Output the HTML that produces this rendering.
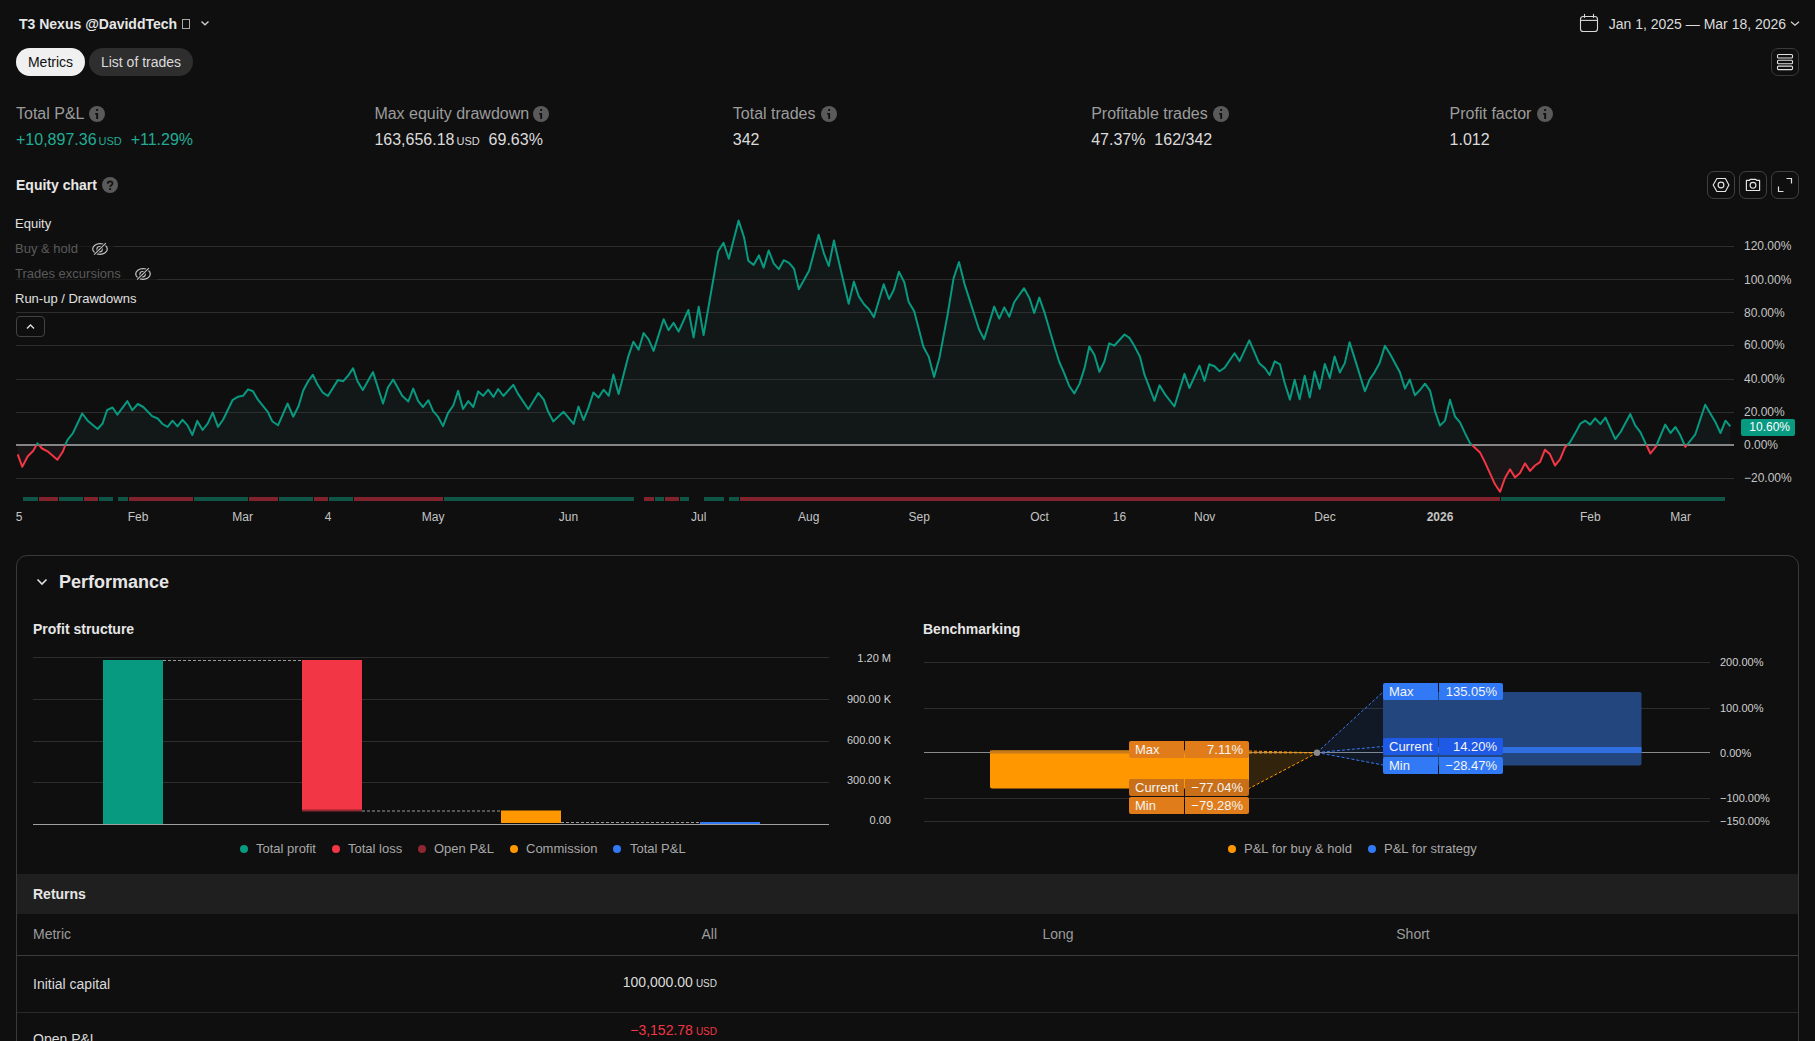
<!DOCTYPE html>
<html><head><meta charset="utf-8">
<style>
*{margin:0;padding:0;box-sizing:border-box}
html,body{width:1815px;height:1041px;overflow:hidden;background:#0f0f0f;font-family:"Liberation Sans",sans-serif;color:#dbdbdb;position:relative}
.a{position:absolute;white-space:nowrap}
.title{left:19px;top:15px;font-size:14px;font-weight:bold;color:#e6e6e6;line-height:18px}
.pill{top:48px;height:28px;border-radius:14px;font-size:14px;line-height:28px;text-align:center}
.mlabel{font-size:16px;color:#9c9c9c;line-height:20px;top:104px}
.mval{font-size:16px;color:#dbdbdb;line-height:20px;top:130px}
.usd{font-size:11px;margin-left:2px}
.green{color:#22ab94}
.ibtn{top:171px;width:28px;height:28px;border:1px solid #404040;border-radius:7px}
.yl{font-size:12px;color:#c4c4c4;left:1744px;line-height:14px}
.xl{font-size:12px;color:#c4c4c4;top:510px;line-height:14px;transform:translateX(-50%)}
.leg{font-size:13px;line-height:16px;left:15px}
.pl{font-size:11px;color:#d0d0d0;line-height:13px;text-align:right;width:80px;left:811px}
.bl{font-size:11px;color:#d0d0d0;line-height:13px;left:1720px}
.lg{font-size:13px;color:#a8a8a8;line-height:16px;top:841px}
.dot{position:absolute;width:8px;height:8px;border-radius:50%;top:845px}
.lab{position:absolute;font-size:13px;color:#f4f4f4;line-height:17px;height:17px;padding:0 6px;white-space:nowrap}
</style></head><body>
<!-- header -->
<div class="a title">T3 Nexus @DaviddTech</div>
<div class="a" style="left:182px;top:19px;width:8px;height:10px;border:1px solid #a8a8a8"></div>
<svg class="a" style="left:200px;top:19px" width="10" height="8" viewBox="0 0 10 8"><path d="M1.5 2.5 L5 5.8 L8.5 2.5" fill="none" stroke="#d0d0d0" stroke-width="1.3"/></svg>
<div class="a pill" style="left:16px;width:69px;background:#f0f0f0;color:#0f0f0f">Metrics</div>
<div class="a pill" style="left:89px;width:104px;background:#2e2e2e;color:#dbdbdb">List of trades</div>

<svg class="a" style="left:1578px;top:13px" width="22" height="21" viewBox="0 0 22 21"><rect x="2.5" y="3.5" width="17" height="15" rx="2.8" fill="none" stroke="#d8d8d8" stroke-width="1.1"/><line x1="2.5" y1="7.4" x2="19.5" y2="7.4" stroke="#d8d8d8" stroke-width="1.1"/><line x1="6.5" y1="0.9" x2="6.5" y2="4.9" stroke="#d8d8d8" stroke-width="1.1"/><line x1="15.5" y1="0.9" x2="15.5" y2="4.9" stroke="#d8d8d8" stroke-width="1.1"/></svg>
<div class="a" style="left:1608.7px;top:15px;font-size:14px;line-height:18px;color:#dcdcdc">Jan 1, 2025 — Mar 18, 2026</div>
<svg class="a" style="left:1789px;top:19px" width="12" height="9" viewBox="0 0 12 9"><path d="M2 2.8 L6 6.2 L10 2.8" fill="none" stroke="#d0d0d0" stroke-width="1.3"/></svg>
<div class="a" style="left:1771px;top:48px;width:28px;height:28px;border:1px solid #3a3a3a;border-radius:7px"></div>
<svg class="a" style="left:1771px;top:48px" width="28" height="28" viewBox="0 0 28 28"><rect x="6.5" y="6.5" width="15" height="3.5" rx="1" fill="none" stroke="#e0e0e0" stroke-width="1.1"/><rect x="6.5" y="12.3" width="15" height="3.5" rx="1" fill="none" stroke="#e0e0e0" stroke-width="1.1"/><rect x="6.5" y="18.1" width="15" height="3.5" rx="1" fill="none" stroke="#e0e0e0" stroke-width="1.1"/></svg>

<!-- metrics -->
<svg width="0" height="0" style="position:absolute"><defs><symbol id="info" viewBox="0 0 16 16"><circle cx="8" cy="8" r="8" fill="#5a5a5a"/><rect x="7.1" y="3" width="2" height="1.9" fill="#111"/><path d="M6.1 7.1 H9.1 V12.9 H7.2 V8.4 H6.1 Z" fill="#111"/></symbol></defs></svg>
<div class="a mlabel" style="left:16px">Total P&amp;L</div><svg class="a" style="left:89px;top:106px" width="16" height="16"><use href="#info"/></svg>
<div class="a mval green" style="left:16px">+10,897.36<span class="usd">USD</span>&nbsp;&nbsp;+11.29%</div>
<div class="a mlabel" style="left:374.4px">Max equity drawdown</div><svg class="a" style="left:533.4px;top:106px" width="16" height="16"><use href="#info"/></svg>
<div class="a mval" style="left:374.4px">163,656.18<span class="usd">USD</span>&nbsp;&nbsp;69.63%</div>
<div class="a mlabel" style="left:732.8px">Total trades</div><svg class="a" style="left:820.8px;top:106px" width="16" height="16"><use href="#info"/></svg>
<div class="a mval" style="left:732.8px">342</div>
<div class="a mlabel" style="left:1091.2px">Profitable trades</div><svg class="a" style="left:1213.2px;top:106px" width="16" height="16"><use href="#info"/></svg>
<div class="a mval" style="left:1091.2px">47.37%&nbsp;&nbsp;162/342</div>
<div class="a mlabel" style="left:1449.6px">Profit factor</div><svg class="a" style="left:1536.6px;top:106px" width="16" height="16"><use href="#info"/></svg>
<div class="a mval" style="left:1449.6px">1.012</div>

<!-- equity chart header -->
<div class="a" style="left:16px;top:176px;font-size:14px;font-weight:bold;line-height:18px;color:#e8e8e8">Equity chart</div>
<svg class="a" style="left:102px;top:177px" width="16" height="16" viewBox="0 0 16 16"><circle cx="8" cy="8" r="8" fill="#5a5a5a"/><path d="M5.7 6.8 C5.7 5.2 6.8 4.3 8.1 4.3 C9.5 4.3 10.5 5.2 10.5 6.4 C10.5 8 8.1 8.2 8.1 10" fill="none" stroke="#111" stroke-width="1.7"/><rect x="7.1" y="11.2" width="2" height="1.8" fill="#111"/></svg>
<div class="a ibtn" style="left:1707px"></div>
<div class="a ibtn" style="left:1739px"></div>
<div class="a ibtn" style="left:1771px"></div>
<svg class="a" style="left:1707px;top:171px" width="28" height="28" viewBox="0 0 28 28"><path d="M9.9 7.5 H18.4 L21.9 14 L18.4 20.5 H9.9 L6.2 14 Z" fill="none" stroke="#e4e4e4" stroke-width="1.15"/><circle cx="14" cy="14" r="2.9" fill="none" stroke="#e4e4e4" stroke-width="1.15"/></svg>
<svg class="a" style="left:1739px;top:171px" width="28" height="28" viewBox="0 0 28 28"><path d="M7.4 9.4 H10.4 L11.2 8.3 H16.8 L17.6 9.4 H20.6 V19.5 H7.4 Z" fill="none" stroke="#e4e4e4" stroke-width="1.15" stroke-linejoin="round"/><circle cx="14" cy="14.3" r="2.9" fill="none" stroke="#e4e4e4" stroke-width="1.15"/></svg>
<svg class="a" style="left:1771px;top:171px" width="28" height="28" viewBox="0 0 28 28"><path d="M15.5 7.5 H20.5 V12.5 M12.5 20.5 H7.5 V15.5" fill="none" stroke="#e0e0e0" stroke-width="1.2"/></svg>

<!-- equity chart -->
<svg class="a" style="left:0;top:0" width="1815" height="540">
<path d="M17.7 454.3 L22.3 466.8 L27.6 456.5 L33.1 451 L36.5 445 L36.5 445 L17.7 445 Z" fill="#1a1516"/>
<path d="M36.5 445 L37.5 443.3 L39 445 L39 445 L36.5 445 Z" fill="#111817"/>
<path d="M39 445 L42 448.5 L47.5 451.3 L57.4 459.8 L62.9 451.5 L65.3 445 L65.3 445 L39 445 Z" fill="#1a1516"/>
<path d="M65.3 445 L66.2 442.7 L67.9 439.4 L72.8 433.4 L82.2 413.5 L87.7 420.7 L97.6 429 L102.6 423.5 L107 410.2 L112.5 407.5 L117.4 414.6 L127.4 401.1 L132.3 410.2 L137.8 404 L143.3 407 L152.1 416.1 L157.7 418.5 L162.6 424 L167.6 426.8 L172.5 420.7 L177.5 426.4 L182.4 419.8 L187.4 425.1 L192.4 435 L197.3 420.9 L202.6 430 L207.8 423.4 L212.7 412.6 L218 426.9 L223.2 419.5 L232.5 400.2 L238.1 396.7 L243 395.8 L248 389.4 L253 391.2 L257.9 399.7 L267.8 411.8 L272.2 421.2 L278 425.3 L287.6 403.5 L293.2 416.7 L298.7 405.7 L303.1 390.8 L308 381.5 L312.8 374.8 L317.4 384.2 L322.9 392.7 L327.9 396 L337.8 380.1 L343.3 381.2 L348.3 375.4 L353 368.2 L357.6 381.5 L362.8 390.1 L373 372.1 L383 403.5 L387.9 387.5 L393.2 379.5 L402.2 395.8 L408.3 401.5 L413.2 388.6 L418.2 401.1 L423.1 407 L428.4 400.2 L433.1 411.2 L438 416.7 L443 426.1 L447.9 413.4 L453.4 405.2 L458.1 390.8 L463 409 L468.3 401.1 L473.3 407 L478.2 391.4 L483.2 395.8 L488.2 389.7 L493.4 396.9 L498.1 389 L503.4 396 L513.3 384.8 L517.9 393.6 L528.4 409.2 L538.3 393 L543.8 399.7 L548.2 411.8 L553.4 421.4 L558.7 416.2 L563.6 411.8 L573.6 423.9 L578.5 406.6 L583.5 420 L588.4 407.9 L593.4 392.5 L598.5 397.6 L603.6 389.7 L608.8 395.8 L613.4 374.5 L618.6 394.1 L628.4 356.1 L633.4 341.7 L638.6 349.7 L643.6 333 L648.6 339.4 L653.6 350.9 L663.6 319.2 L668.5 330.1 L673.6 322.9 L678.6 331.6 L688.4 310 L693.6 337.6 L698.7 306.7 L703.6 335.1 L718.2 251.2 L723.5 242.8 L728.8 258.8 L738.6 220.6 L744.1 237.5 L748.3 260.7 L753.6 264.9 L758.9 255.4 L763.6 267.6 L768.7 250.5 L773.7 263.4 L778.8 269.2 L783.7 260.2 L789 262.8 L794 268.6 L798.8 289.3 L809.1 270.8 L818.6 234.8 L823.9 253.3 L828.8 266 L833.9 240.6 L848.7 303.8 L853.9 281.6 L858.8 296.4 L864.2 304.5 L868.9 309.2 L873.9 317.2 L883.7 284.3 L889.1 299.1 L893.8 289.7 L898.9 271.8 L904.3 282.3 L908.6 301.8 L914.2 311.2 L923.4 346.8 L928.8 356.9 L934.1 377.1 L939.5 357.6 L947.6 314.6 L953.6 278.2 L959 262.1 L964.4 283.6 L979 329.2 L984.1 339.3 L994.2 306.6 L999.2 318.7 L1004.3 307.4 L1009.3 316.8 L1014.3 302 L1024.1 288.2 L1029.5 298.2 L1034.2 313 L1039.3 297.6 L1044.9 313.7 L1054.3 346 L1059.1 361.5 L1064.4 373.6 L1069.1 385.7 L1074.3 393.5 L1079.6 383.6 L1084.6 367.9 L1089.3 346.4 L1094.4 354.7 L1099.4 371.9 L1104.4 361.5 L1109.2 343.3 L1114.2 345.7 L1124.5 334.5 L1129.4 337.8 L1134.7 346.6 L1140 356.7 L1144.4 374.4 L1154.5 400.8 L1159.5 385.4 L1164.7 393.8 L1174.4 406.5 L1184.5 373.9 L1189.3 388 L1199.5 365.7 L1204.5 381 L1209.2 364.2 L1214.5 366.3 L1219.5 371.3 L1224.6 367.8 L1234.5 353.2 L1239.6 361.1 L1249.3 340.4 L1259 362.9 L1265 368.3 L1269.6 375 L1274.7 361.3 L1280 364.4 L1284.4 382 L1289.9 399.6 L1294.7 379.8 L1299.6 399.2 L1304.7 375.7 L1309.8 397.4 L1314.6 371.6 L1319.7 388.9 L1324.8 363.9 L1329.8 378 L1334.6 356.4 L1339.8 372.5 L1344.8 363.1 L1349.6 342.3 L1354.9 359.1 L1364.9 391.3 L1369.5 379.8 L1374.7 372.1 L1379.6 363.1 L1384.9 345.7 L1390.2 354.2 L1399.9 372.3 L1405 388.6 L1409.8 379.5 L1414.9 395.2 L1420 390 L1425 383.7 L1430 390.6 L1435 411.2 L1440 425.6 L1445 420.6 L1450 399.7 L1455 416.5 L1460 422.4 L1465 433.1 L1470 443.1 L1472 445 L1472 445 L65.3 445 Z" fill="#111817"/>
<path d="M1472 445 L1480 452.4 L1485 462.4 L1495 484.3 L1500 491.8 L1505 478 L1510 469.3 L1515 477.4 L1520 473 L1525 463.4 L1530 470.9 L1535 465.5 L1540 462.2 L1545 449.7 L1550 454.3 L1555 465.5 L1560 459.3 L1565 447.4 L1567.3 445 L1567.3 445 L1472 445 Z" fill="#1a1516"/>
<path d="M1567.3 445 L1570 442.2 L1575 433.6 L1580.3 423.7 L1585.3 420.7 L1590.2 424.6 L1595.1 418.4 L1600.4 424.1 L1605.4 417.5 L1615.3 439.2 L1620.6 432 L1630.3 414.1 L1635.2 425.4 L1640.5 432.3 L1645.7 443.6 L1646.4 445 L1646.4 445 L1567.3 445 Z" fill="#111817"/>
<path d="M1646.4 445 L1650.4 453.5 L1655.9 446.6 L1656.6 445 L1656.6 445 L1646.4 445 Z" fill="#1a1516"/>
<path d="M1656.6 445 L1665.2 424.6 L1670.5 433 L1675.5 427 L1680.5 435.6 L1684.6 445 L1684.6 445 L1656.6 445 Z" fill="#111817"/>
<path d="M1684.6 445 L1685.4 446.9 L1686.9 445 L1686.9 445 L1684.6 445 Z" fill="#1a1516"/>
<path d="M1686.9 445 L1695.3 434.3 L1705.2 404.8 L1715.2 421.7 L1720.5 433 L1725.5 420.7 L1730.4 426.4 L1730.4 445 L1686.9 445 Z" fill="#111817"/>
<g fill="#2e2e2e"><rect x="16" y="246" width="1718" height="1"/><rect x="16" y="279" width="1718" height="1"/><rect x="16" y="312" width="1718" height="1"/><rect x="16" y="345" width="1718" height="1"/><rect x="16" y="379" width="1718" height="1"/><rect x="16" y="412" width="1718" height="1"/><rect x="16" y="478" width="1718" height="1"/></g>
<rect x="16" y="444" width="1718" height="2" fill="#858585"/>
<path d="M17.7 454.3 L22.3 466.8 L27.6 456.5 L33.1 451 L36.5 445" fill="none" stroke="#f23645" stroke-width="2" stroke-linejoin="round"/>
<path d="M36.5 445 L37.5 443.3 L39 445" fill="none" stroke="#089981" stroke-width="2" stroke-linejoin="round"/>
<path d="M39 445 L42 448.5 L47.5 451.3 L57.4 459.8 L62.9 451.5 L65.3 445" fill="none" stroke="#f23645" stroke-width="2" stroke-linejoin="round"/>
<path d="M65.3 445 L66.2 442.7 L67.9 439.4 L72.8 433.4 L82.2 413.5 L87.7 420.7 L97.6 429 L102.6 423.5 L107 410.2 L112.5 407.5 L117.4 414.6 L127.4 401.1 L132.3 410.2 L137.8 404 L143.3 407 L152.1 416.1 L157.7 418.5 L162.6 424 L167.6 426.8 L172.5 420.7 L177.5 426.4 L182.4 419.8 L187.4 425.1 L192.4 435 L197.3 420.9 L202.6 430 L207.8 423.4 L212.7 412.6 L218 426.9 L223.2 419.5 L232.5 400.2 L238.1 396.7 L243 395.8 L248 389.4 L253 391.2 L257.9 399.7 L267.8 411.8 L272.2 421.2 L278 425.3 L287.6 403.5 L293.2 416.7 L298.7 405.7 L303.1 390.8 L308 381.5 L312.8 374.8 L317.4 384.2 L322.9 392.7 L327.9 396 L337.8 380.1 L343.3 381.2 L348.3 375.4 L353 368.2 L357.6 381.5 L362.8 390.1 L373 372.1 L383 403.5 L387.9 387.5 L393.2 379.5 L402.2 395.8 L408.3 401.5 L413.2 388.6 L418.2 401.1 L423.1 407 L428.4 400.2 L433.1 411.2 L438 416.7 L443 426.1 L447.9 413.4 L453.4 405.2 L458.1 390.8 L463 409 L468.3 401.1 L473.3 407 L478.2 391.4 L483.2 395.8 L488.2 389.7 L493.4 396.9 L498.1 389 L503.4 396 L513.3 384.8 L517.9 393.6 L528.4 409.2 L538.3 393 L543.8 399.7 L548.2 411.8 L553.4 421.4 L558.7 416.2 L563.6 411.8 L573.6 423.9 L578.5 406.6 L583.5 420 L588.4 407.9 L593.4 392.5 L598.5 397.6 L603.6 389.7 L608.8 395.8 L613.4 374.5 L618.6 394.1 L628.4 356.1 L633.4 341.7 L638.6 349.7 L643.6 333 L648.6 339.4 L653.6 350.9 L663.6 319.2 L668.5 330.1 L673.6 322.9 L678.6 331.6 L688.4 310 L693.6 337.6 L698.7 306.7 L703.6 335.1 L718.2 251.2 L723.5 242.8 L728.8 258.8 L738.6 220.6 L744.1 237.5 L748.3 260.7 L753.6 264.9 L758.9 255.4 L763.6 267.6 L768.7 250.5 L773.7 263.4 L778.8 269.2 L783.7 260.2 L789 262.8 L794 268.6 L798.8 289.3 L809.1 270.8 L818.6 234.8 L823.9 253.3 L828.8 266 L833.9 240.6 L848.7 303.8 L853.9 281.6 L858.8 296.4 L864.2 304.5 L868.9 309.2 L873.9 317.2 L883.7 284.3 L889.1 299.1 L893.8 289.7 L898.9 271.8 L904.3 282.3 L908.6 301.8 L914.2 311.2 L923.4 346.8 L928.8 356.9 L934.1 377.1 L939.5 357.6 L947.6 314.6 L953.6 278.2 L959 262.1 L964.4 283.6 L979 329.2 L984.1 339.3 L994.2 306.6 L999.2 318.7 L1004.3 307.4 L1009.3 316.8 L1014.3 302 L1024.1 288.2 L1029.5 298.2 L1034.2 313 L1039.3 297.6 L1044.9 313.7 L1054.3 346 L1059.1 361.5 L1064.4 373.6 L1069.1 385.7 L1074.3 393.5 L1079.6 383.6 L1084.6 367.9 L1089.3 346.4 L1094.4 354.7 L1099.4 371.9 L1104.4 361.5 L1109.2 343.3 L1114.2 345.7 L1124.5 334.5 L1129.4 337.8 L1134.7 346.6 L1140 356.7 L1144.4 374.4 L1154.5 400.8 L1159.5 385.4 L1164.7 393.8 L1174.4 406.5 L1184.5 373.9 L1189.3 388 L1199.5 365.7 L1204.5 381 L1209.2 364.2 L1214.5 366.3 L1219.5 371.3 L1224.6 367.8 L1234.5 353.2 L1239.6 361.1 L1249.3 340.4 L1259 362.9 L1265 368.3 L1269.6 375 L1274.7 361.3 L1280 364.4 L1284.4 382 L1289.9 399.6 L1294.7 379.8 L1299.6 399.2 L1304.7 375.7 L1309.8 397.4 L1314.6 371.6 L1319.7 388.9 L1324.8 363.9 L1329.8 378 L1334.6 356.4 L1339.8 372.5 L1344.8 363.1 L1349.6 342.3 L1354.9 359.1 L1364.9 391.3 L1369.5 379.8 L1374.7 372.1 L1379.6 363.1 L1384.9 345.7 L1390.2 354.2 L1399.9 372.3 L1405 388.6 L1409.8 379.5 L1414.9 395.2 L1420 390 L1425 383.7 L1430 390.6 L1435 411.2 L1440 425.6 L1445 420.6 L1450 399.7 L1455 416.5 L1460 422.4 L1465 433.1 L1470 443.1 L1472 445" fill="none" stroke="#089981" stroke-width="2" stroke-linejoin="round"/>
<path d="M1472 445 L1480 452.4 L1485 462.4 L1495 484.3 L1500 491.8 L1505 478 L1510 469.3 L1515 477.4 L1520 473 L1525 463.4 L1530 470.9 L1535 465.5 L1540 462.2 L1545 449.7 L1550 454.3 L1555 465.5 L1560 459.3 L1565 447.4 L1567.3 445" fill="none" stroke="#f23645" stroke-width="2" stroke-linejoin="round"/>
<path d="M1567.3 445 L1570 442.2 L1575 433.6 L1580.3 423.7 L1585.3 420.7 L1590.2 424.6 L1595.1 418.4 L1600.4 424.1 L1605.4 417.5 L1615.3 439.2 L1620.6 432 L1630.3 414.1 L1635.2 425.4 L1640.5 432.3 L1645.7 443.6 L1646.4 445" fill="none" stroke="#089981" stroke-width="2" stroke-linejoin="round"/>
<path d="M1646.4 445 L1650.4 453.5 L1655.9 446.6 L1656.6 445" fill="none" stroke="#f23645" stroke-width="2" stroke-linejoin="round"/>
<path d="M1656.6 445 L1665.2 424.6 L1670.5 433 L1675.5 427 L1680.5 435.6 L1684.6 445" fill="none" stroke="#089981" stroke-width="2" stroke-linejoin="round"/>
<path d="M1684.6 445 L1685.4 446.9 L1686.9 445" fill="none" stroke="#f23645" stroke-width="2" stroke-linejoin="round"/>
<path d="M1686.9 445 L1695.3 434.3 L1705.2 404.8 L1715.2 421.7 L1720.5 433 L1725.5 420.7 L1730.4 426.4" fill="none" stroke="#089981" stroke-width="2" stroke-linejoin="round"/>
<g fill="#0f5548">
<rect x="23" y="497" width="15" height="4"/><rect x="59" y="497" width="24" height="4"/><rect x="99" y="497" width="14" height="4"/><rect x="118" y="497" width="10" height="4"/><rect x="194" y="497" width="54" height="4"/><rect x="279" y="497" width="34" height="4"/><rect x="329" y="497" width="24" height="4"/><rect x="444" y="497" width="190" height="4"/><rect x="655" y="497" width="9" height="4"/><rect x="680" y="497" width="9" height="4"/><rect x="704" y="497" width="20" height="4"/><rect x="729" y="497" width="10" height="4"/><rect x="1501" y="497" width="224" height="4"/>
</g>
<g fill="#82222c">
<rect x="39" y="497" width="19" height="4"/><rect x="84" y="497" width="14" height="4"/><rect x="129" y="497" width="64" height="4"/><rect x="249" y="497" width="29" height="4"/><rect x="314" y="497" width="14" height="4"/><rect x="354" y="497" width="89" height="4"/><rect x="644" y="497" width="10" height="4"/><rect x="665" y="497" width="14" height="4"/><rect x="740" y="497" width="760" height="4"/>
</g>
</svg>
<!-- legend -->
<div class="a" style="left:11px;top:212px;width:48px;height:24px;background:#0f0f0f"></div>
<div class="a leg" style="top:216px;color:#e0e0e0">Equity</div>
<div class="a" style="left:11px;top:235px;width:103px;height:25px;background:rgba(15,15,15,0.6)"></div>
<div class="a leg" style="top:241px;color:#5a5a5a">Buy &amp; hold</div>
<svg class="a" style="left:91px;top:241px" width="18" height="15" viewBox="0 0 18 15"><ellipse cx="9" cy="8" rx="7.3" ry="5.4" fill="none" stroke="#c4c4c4" stroke-width="1.2"/><circle cx="8.6" cy="8.2" r="2.7" fill="none" stroke="#c4c4c4" stroke-width="1.1"/><path d="M3.1 13.7 L14.9 2.2" stroke="#0f0f0f" stroke-width="2.8"/><path d="M3.1 13.7 L14.9 2.2" stroke="#c4c4c4" stroke-width="1.1"/></svg>
<div class="a" style="left:11px;top:261px;width:146px;height:25px;background:rgba(15,15,15,0.6)"></div>
<div class="a leg" style="top:266px;color:#5a5a5a">Trades excursions</div>
<svg class="a" style="left:134px;top:266px" width="18" height="15" viewBox="0 0 18 15"><ellipse cx="9" cy="8" rx="7.3" ry="5.4" fill="none" stroke="#c4c4c4" stroke-width="1.2"/><circle cx="8.6" cy="8.2" r="2.7" fill="none" stroke="#c4c4c4" stroke-width="1.1"/><path d="M3.1 13.7 L14.9 2.2" stroke="#0f0f0f" stroke-width="2.8"/><path d="M3.1 13.7 L14.9 2.2" stroke="#c4c4c4" stroke-width="1.1"/></svg>
<div class="a leg" style="top:291px;color:#e0e0e0">Run-up / Drawdowns</div>
<div class="a" style="left:16px;top:316px;width:29px;height:21px;border:1px solid #424242;border-radius:4px"></div>
<svg class="a" style="left:16px;top:316px" width="29" height="21" viewBox="0 0 29 21"><path d="M11 12.5 L14.5 9 L18 12.5" fill="none" stroke="#e0e0e0" stroke-width="1.3"/></svg>

<!-- y labels -->
<div class="a yl" style="top:239px">120.00%</div>
<div class="a yl" style="top:273px">100.00%</div>
<div class="a yl" style="top:306px">80.00%</div>
<div class="a yl" style="top:338px">60.00%</div>
<div class="a yl" style="top:372px">40.00%</div>
<div class="a yl" style="top:405px">20.00%</div>
<div class="a yl" style="top:438px">0.00%</div>
<div class="a yl" style="top:471px">−20.00%</div>
<div class="a" style="left:1741px;top:419px;width:54px;height:17px;background:#089981;border-radius:2px;color:#fff;font-size:12px;line-height:17px;text-align:right;padding-right:5px">10.60%</div>

<!-- x labels -->
<div class="a xl" style="left:19px">5</div>
<div class="a xl" style="left:138px">Feb</div>
<div class="a xl" style="left:242.7px">Mar</div>
<div class="a xl" style="left:328px">4</div>
<div class="a xl" style="left:433.2px">May</div>
<div class="a xl" style="left:568.5px">Jun</div>
<div class="a xl" style="left:698.7px">Jul</div>
<div class="a xl" style="left:808.8px">Aug</div>
<div class="a xl" style="left:919.2px">Sep</div>
<div class="a xl" style="left:1039.5px">Oct</div>
<div class="a xl" style="left:1119.5px">16</div>
<div class="a xl" style="left:1204.7px">Nov</div>
<div class="a xl" style="left:1325px">Dec</div>
<div class="a xl" style="left:1440px;font-weight:bold">2026</div>
<div class="a xl" style="left:1590.3px">Feb</div>
<div class="a xl" style="left:1680.6px">Mar</div>

<!-- performance panel -->
<div class="a" style="left:16px;top:555px;width:1783px;height:600px;border:1px solid #3a3a3a;border-radius:11px"></div>
<svg class="a" style="left:34px;top:575px" width="16" height="14" viewBox="0 0 16 14"><path d="M3.5 4.5 L8 9 L12.5 4.5" fill="none" stroke="#e0e0e0" stroke-width="1.6"/></svg>
<div class="a" style="left:59px;top:571px;font-size:18px;font-weight:bold;line-height:22px;color:#e6e6e6">Performance</div>

<div class="a" style="left:33px;top:620px;font-size:14px;font-weight:bold;line-height:18px;color:#e6e6e6">Profit structure</div>
<svg class="a" style="left:0;top:640px" width="900" height="200">
<g fill="#2e2e2e">
<rect x="33" y="17" width="796" height="1"/><rect x="33" y="59" width="796" height="1"/><rect x="33" y="101" width="796" height="1"/><rect x="33" y="142" width="796" height="1"/>
</g>
<rect x="103" y="20" width="60" height="164.5" fill="#089981"/>
<rect x="302" y="20" width="60" height="150" fill="#f23645"/>
<rect x="302" y="169.5" width="60" height="2" fill="#8f2731"/>
<rect x="501" y="170.5" width="60" height="12.5" fill="#ff9800"/>
<rect x="700" y="182" width="60" height="2.5" fill="#3179f5"/>
<path d="M163 20.5 H302 M362 171 H501 M561 182.5 H700" stroke="#9a9a9a" stroke-width="1" stroke-dasharray="3 2"/>
<rect x="33" y="184" width="796" height="1" fill="#a0a0a0"/>
</svg>
<div class="a pl" style="top:652px">1.20 M</div>
<div class="a pl" style="top:693px">900.00 K</div>
<div class="a pl" style="top:734px">600.00 K</div>
<div class="a pl" style="top:774px">300.00 K</div>
<div class="a pl" style="top:814px">0.00</div>
<span class="dot" style="left:240px;background:#089981"></span><div class="a lg" style="left:256px">Total profit</div>
<span class="dot" style="left:332px;background:#f23645"></span><div class="a lg" style="left:348px">Total loss</div>
<span class="dot" style="left:418px;background:#8f2731"></span><div class="a lg" style="left:434px">Open P&amp;L</div>
<span class="dot" style="left:510px;background:#ff9800"></span><div class="a lg" style="left:526px">Commission</div>
<span class="dot" style="left:613px;background:#3179f5"></span><div class="a lg" style="left:630px">Total P&amp;L</div>

<div class="a" style="left:923px;top:620px;font-size:14px;font-weight:bold;line-height:18px;color:#e6e6e6">Benchmarking</div>
<svg class="a" style="left:900px;top:640px" width="900" height="200">
<g fill="#2e2e2e">
<rect x="24" y="22" width="786" height="1"/><rect x="24" y="68" width="786" height="1"/><rect x="24" y="158" width="786" height="1"/><rect x="24" y="181" width="786" height="1"/>
</g>
<rect x="24" y="112" width="786" height="1" fill="#8a8a8a"/>
<path d="M417 112.8 L483 52 L483 125.5 Z" fill="#3179f5" fill-opacity="0.1"/>
<path d="M417 112.8 L349 111 L349 148.5 Z" fill="#ff9800" fill-opacity="0.15"/>
<rect x="90" y="110.5" width="259" height="38" rx="2" fill="#ff9800"/>
<rect x="90" y="110.5" width="259" height="3" fill="#c87a1a"/>
<rect x="483" y="52" width="258.5" height="73.5" rx="2" fill="#23467f"/>
<rect x="483" y="107" width="258.5" height="6" fill="#2f6fe0"/>
<path d="M417 112.8 L349 111 M417 112.8 L349 113 M417 112.8 L349 148.5" stroke="#ff9800" stroke-width="1" stroke-dasharray="3 2"/>
<path d="M417 112.5 L483 52 M417 112.5 L483 106.5 M417 112.5 L483 125" stroke="#3a7bf0" stroke-width="1" stroke-dasharray="3 2"/>
<circle cx="417" cy="112.8" r="3.2" fill="#8a8a8a"/>
</svg>
<div class="a lab" style="left:1129px;top:741px;width:55px;background:#e07c1a;border-radius:2px 0 0 2px">Max</div>
<div class="a lab" style="left:1185px;top:741px;width:64px;background:#e07c1a;text-align:right;border-radius:0 2px 2px 0">7.11%</div>
<div class="a lab" style="left:1129px;top:779px;width:55px;background:#c96f17;border-radius:2px 0 0 2px">Current</div>
<div class="a lab" style="left:1185px;top:779px;width:64px;background:#c96f17;text-align:right;border-radius:0 2px 2px 0">−77.04%</div>
<div class="a lab" style="left:1129px;top:797px;width:55px;background:#e07c1a;border-radius:2px 0 0 2px">Min</div>
<div class="a lab" style="left:1185px;top:797px;width:64px;background:#e07c1a;text-align:right;border-radius:0 2px 2px 0">−79.28%</div>
<div class="a lab" style="left:1383px;top:683px;width:55px;background:#3179f5;border-radius:2px 0 0 2px">Max</div>
<div class="a lab" style="left:1439px;top:683px;width:64px;background:#3179f5;text-align:right;border-radius:0 2px 2px 0">135.05%</div>
<div class="a lab" style="left:1383px;top:738px;width:55px;background:#1f5ae6;border-radius:2px 0 0 2px">Current</div>
<div class="a lab" style="left:1439px;top:738px;width:64px;background:#1f5ae6;text-align:right;border-radius:0 2px 2px 0">14.20%</div>
<div class="a lab" style="left:1383px;top:757px;width:55px;background:#3179f5;border-radius:2px 0 0 2px">Min</div>
<div class="a lab" style="left:1439px;top:757px;width:64px;background:#3179f5;text-align:right;border-radius:0 2px 2px 0">−28.47%</div>
<div class="a bl" style="top:656px">200.00%</div>
<div class="a bl" style="top:702px">100.00%</div>
<div class="a bl" style="top:747px">0.00%</div>
<div class="a bl" style="top:792px">−100.00%</div>
<div class="a bl" style="top:815px">−150.00%</div>
<span class="dot" style="left:1228px;background:#ff9800"></span><div class="a lg" style="left:1244px">P&amp;L for buy &amp; hold</div>
<span class="dot" style="left:1368px;background:#3179f5"></span><div class="a lg" style="left:1384px">P&amp;L for strategy</div>

<!-- returns -->
<div class="a" style="left:17px;top:874px;width:1781px;height:40px;background:#1f1f1f"></div>
<div class="a" style="left:33px;top:885px;font-size:14px;font-weight:bold;line-height:18px;color:#e6e6e6">Returns</div>
<div class="a" style="left:33px;top:925px;font-size:14px;line-height:18px;color:#9c9c9c">Metric</div>
<div class="a" style="left:617px;width:100px;text-align:right;top:925px;font-size:14px;line-height:18px;color:#9c9c9c">All</div>
<div class="a" style="left:1008px;width:100px;text-align:center;top:925px;font-size:14px;line-height:18px;color:#9c9c9c">Long</div>
<div class="a" style="left:1363px;width:100px;text-align:center;top:925px;font-size:14px;line-height:18px;color:#9c9c9c">Short</div>
<div class="a" style="left:17px;top:955px;width:1781px;height:1px;background:#3c3c3c"></div>
<div class="a" style="left:33px;top:975px;font-size:14px;line-height:18px;color:#dbdbdb">Initial capital</div>
<div class="a" style="left:517px;width:200px;text-align:right;top:973px;font-size:14px;line-height:18px;color:#dbdbdb">100,000.00<span style="font-size:10px;margin-left:3px">USD</span></div>
<div class="a" style="left:17px;top:1012px;width:1781px;height:1px;background:#2a2a2a"></div>
<div class="a" style="left:33px;top:1030px;font-size:14px;line-height:18px;color:#dbdbdb">Open P&amp;L</div>
<div class="a" style="left:517px;width:200px;text-align:right;top:1021px;font-size:14px;line-height:18px;color:#f23645">−3,152.78<span style="font-size:10px;margin-left:3px">USD</span></div>
</body></html>
